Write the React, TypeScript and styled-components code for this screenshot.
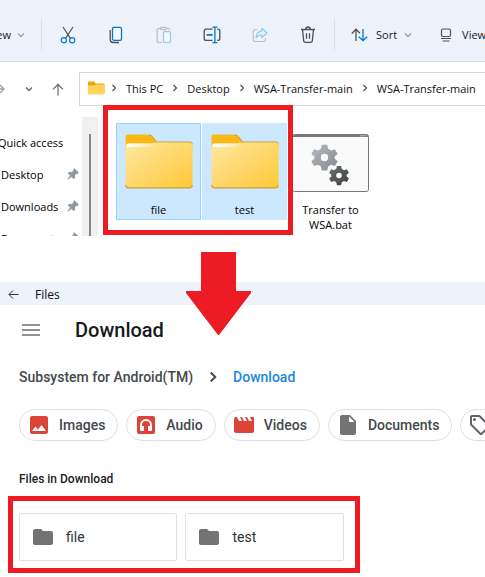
import React from "react";
import styled, { createGlobalStyle } from "styled-components";

const Global = createGlobalStyle`
  * { box-sizing: border-box; }
  body { margin: 0; background: #ffffff; overflow-x: hidden; }
  button { border: 0; padding: 0; margin: 0; background: none; font: inherit; color: inherit; white-space: nowrap; }
  a { color: inherit; text-decoration: none; white-space: nowrap; }
  svg { display: block; flex: none; }
`;

const RED = "#ed1c24";

const Page = styled.main`
  position: relative;
  overflow: hidden;
`;

/* ---------- Explorer window ---------- */

const Explorer = styled.section`
  font-family: "Open Sans", "Noto Sans", sans-serif;
  font-size: 11px;
  line-height: 15px;
  color: #1a1a1a;
  height: 236px;
  overflow: hidden;
`;

const Ribbon = styled.div`
  display: flex;
  align-items: center;
  height: 62px;
  padding-top: 8px;
  background: #eef2fa;
  border-bottom: 1px solid #d9dce2;
`;

const FirstGroup = styled.div`
  display: flex;
  flex: none;
  width: 41px;
`;

const RibbonMenu = styled.button<{ $gap: number; $indent: number }>`
  display: flex;
  flex: none;
  align-items: center;
  gap: ${(p) => p.$gap}px;
  margin-left: ${(p) => p.$indent}px;
`;

const Separator = styled.span`
  flex: none;
  width: 1px;
  height: 32px;
  background: #dcdfe5;
`;

const ToolGroup = styled.div`
  display: flex;
  flex: none;
  gap: 24px;
  padding: 0 14px;
`;

const ToolButton = styled.button`
  display: grid;
  place-items: center;
  width: 24px;
  height: 24px;
`;

const AddressRow = styled.div`
  display: flex;
  align-items: center;
  padding-top: 10px;
`;

const NavButtons = styled.div`
  display: flex;
  flex: none;
  align-items: center;
  width: 93px;
  height: 34px;
  margin-left: -14px;
`;

const NavButton = styled.button<{ $width: number }>`
  display: grid;
  place-items: center;
  width: ${(p) => p.$width}px;
  height: 24px;
`;

const AddressBar = styled.nav`
  display: flex;
  flex: 1;
  align-items: center;
  min-width: 0;
  height: 34px;
  padding: 0 0 2px 8px;
  overflow: hidden;
  border: 1px solid #d9d9d9;
  border-right: 0;
  color: #111111;
  > a { padding: 0 3px; }
`;

const CrumbGap = styled.span`
  display: grid;
  flex: none;
  place-items: center;
  width: 18px;
`;

const ExplorerBody = styled.div`
  display: flex;
  align-items: flex-start;
`;

const Sidebar = styled.ul`
  flex: none;
  width: 82px;
  margin: 0;
  padding: 20px 0 0;
  list-style: none;
`;

const SideItem = styled.li<{ $indent: number }>`
  display: flex;
  align-items: center;
  justify-content: space-between;
  height: 32px;
  padding-right: 3px;
  color: #000000;
  white-space: nowrap;
  > a { margin-left: ${(p) => p.$indent}px; }
`;

const ScrollTrack = styled.div`
  flex: none;
  width: 16px;
  height: 119px;
  margin-top: 11px;
  padding: 17px 7px 0;
  background: #f0f0f0;
`;

const ScrollThumb = styled.div`
  width: 2px;
  height: 102px;
  background: #858585;
`;

const PaneEdge = styled.div`
  flex: none;
  width: 1px;
  height: 119px;
  margin: 11px 15px 0 2px;
  background: #f5f5f5;
`;

const FileGrid = styled.div`
  display: flex;
  align-items: flex-start;
  gap: 1px;
  padding-top: 17px;
`;

const Selection = styled.div`
  position: relative;
  display: flex;
  flex: none;
  gap: 1px;
`;

const Highlight = styled.span<{ $inset: string }>`
  position: absolute;
  z-index: 2;
  inset: ${(p) => p.$inset};
  border: 5px solid ${RED};
  pointer-events: none;
`;

const FileTile = styled.button<{ $state: "focused" | "selected" | "plain" }>`
  display: flex;
  flex: none;
  flex-direction: column;
  align-items: center;
  gap: 10px;
  width: 85px;
  min-height: 97px;
  padding: 10px 8px 0;
  color: #000000;
  text-align: center;
  white-space: normal;
  border: 1px solid
    ${(p) => (p.$state === "focused" ? "#99d1ff" : p.$state === "selected" ? "#cce8ff" : "transparent")};
  background: ${(p) => (p.$state === "plain" ? "transparent" : "#cce8ff")};
`;

/* ---------- Android files window ---------- */

const AndroidWindow = styled.section`
  margin-top: 46px;
  font-family: Roboto, sans-serif;
  font-size: 14px;
  font-weight: 500;
  color: #43494d;
`;

const TitleBar = styled.div`
  display: flex;
  align-items: center;
  gap: 15px;
  height: 23px;
  padding: 2px 0 0 8px;
  background: #eef2fa;
  font: 12px/16px "Open Sans", "Noto Sans", sans-serif;
  color: #111111;
`;

const AppBar = styled.header`
  display: flex;
  align-items: center;
  gap: 35px;
  height: 48px;
  padding: 2px 0 0 22px;
`;

const AppTitle = styled.h1`
  margin: 0;
  font-size: 20px;
  line-height: 24px;
  font-weight: 500;
  color: #17191c;
`;

const PathRow = styled.nav`
  display: flex;
  align-items: center;
  gap: 14px;
  height: 48px;
  padding-left: 19px;
`;

const CurrentPath = styled.a`
  color: #2186e0;
`;

const Chips = styled.div`
  display: flex;
  gap: 8px;
  padding: 8px 0 0 19px;
`;

const Chip = styled.button`
  display: flex;
  flex: none;
  align-items: center;
  gap: 8px;
  height: 32px;
  padding: 0 12px 0 7px;
  border: 1px solid #dfe0e2;
  border-radius: 16px;
`;

const SectionTitle = styled.h2`
  margin: 30px 0 26px 19px;
  font-size: 12px;
  line-height: 16px;
  font-weight: 500;
  color: #202124;
`;

const Cards = styled.div`
  position: relative;
  display: grid;
  grid-template-columns: 1fr 1fr;
  gap: 8px;
  width: 67%;
  margin: 0 0 16px 19px;
`;

const Card = styled.button`
  display: flex;
  align-items: center;
  gap: 11px;
  height: 48px;
  padding-left: 11px;
  border: 1px solid #e0e0e0;
  border-radius: 2px;
  font-weight: 400;
  color: #303336;
`;

const Arrow = styled.svg`
  position: absolute;
  z-index: 3;
  top: 252px;
  left: 186px;
`;

/* ---------- Drawings ---------- */

const Chevron = ({ down = false, color = "#555", size = 8, stroke = 1.3 }: { down?: boolean; color?: string; size?: number; stroke?: number }) => (
  <svg width={size} height={size} viewBox="0 0 8 8" fill="none" stroke={color} strokeWidth={stroke}>
    <path d={down ? "M1 2.5 4 5.5 7 2.5" : "M2.5 1 5.5 4 2.5 7"} />
  </svg>
);

const ForwardArrow = () => (
  <svg width="10" height="10" viewBox="0 0 10 10" fill="none" stroke="#a0a0a0" strokeWidth="1.3">
    <path d="M0 5h9M5 1l4 4-4 4" />
  </svg>
);

const Scissors = () => (
  <svg width="16" height="18" viewBox="0 0 16 18" fill="none" strokeWidth="1.2">
    <path d="M3 1l7.6 11.6M13 1 5.4 12.6" stroke="#505050" />
    <circle cx="3.8" cy="14.2" r="2.6" stroke="#0078d4" />
    <circle cx="12.2" cy="14.2" r="2.6" stroke="#0078d4" />
  </svg>
);

const Copy = () => (
  <svg width="14" height="18" viewBox="0 0 14 18" fill="none" strokeWidth="1.3">
    <path d="M1.2 4v9.5a3 3 0 0 0 3 3H10" stroke="#505050" />
    <rect x="3.5" y="1.3" width="9" height="13" rx="1.6" stroke="#0078d4" fill="#f5f9fe" />
  </svg>
);

const Paste = () => (
  <svg width="16" height="18" viewBox="0 0 16 18" fill="none" strokeWidth="1.2">
    <path d="M5 2.5H2.6c-.9 0-1.5.6-1.5 1.5v11c0 .9.6 1.5 1.5 1.5H6M10 2.5h2.2c.8 0 1.4.5 1.4 1.3" stroke="#b9bcc1" />
    <rect x="4.5" y="1.4" width="6" height="2.2" rx="1.1" stroke="#b9bcc1" />
    <rect x="7.5" y="5.6" width="7" height="10.9" rx="1.2" stroke="#93c8f0" fill="#f2f8fe" />
  </svg>
);

const Rename = () => (
  <svg width="18" height="18" viewBox="0 0 18 18" fill="none" strokeWidth="1.3">
    <path d="M9.5 3.2H3.2a2 2 0 0 0-2 2v7.2a2 2 0 0 0 2 2h6.3M14.3 3.2h.5a2 2 0 0 1 2 2v7.2a2 2 0 0 1-2 2h-.5" stroke="#505050" />
    <path d="M9.4 1.2h5M9.4 16.6h5M11.9 1.2v15.4" stroke="#0078d4" />
    <path d="M3.6 8.9h6" stroke="#0078d4" strokeWidth="1.8" />
  </svg>
);

const Share = () => (
  <svg width="16" height="16" viewBox="0 0 16 16" fill="none" strokeWidth="1.1" strokeLinejoin="round">
    <path d="M5.5 2.8H3A1.8 1.8 0 0 0 1.2 4.6v8A1.8 1.8 0 0 0 3 14.5h8.6a1.8 1.8 0 0 0 1.8-1.9V11" stroke="#b9bcc1" />
    <path d="M9.8 1.3 15 6l-5.2 4.6V8C7 7.8 5.3 8.8 4 11c.1-4 2.3-6.6 5.8-7z" stroke="#8fc6f1" fill="#e5f2fd" />
  </svg>
);

const Trash = () => (
  <svg width="16" height="18" viewBox="0 0 16 18" fill="none" stroke="#505050" strokeWidth="1.3">
    <path d="M1 3.5h14M5.7 3.3a2.3 2.3 0 0 1 4.6 0M2.5 3.5l1.2 11.4c.1.9.7 1.5 1.6 1.5h5.4c.9 0 1.5-.6 1.6-1.5l1.2-11.4M6.5 7.2v5.6M9.5 7.2v5.6" />
  </svg>
);

const SortIcon = () => (
  <svg width="18" height="14" viewBox="0 0 18 14" fill="none" strokeWidth="1.3">
    <path d="M5 13V1.5M.8 5.5 5 1.2l4 4" stroke="#505050" />
    <path d="M12 1v11.5M7.8 8.7l4.2 4 4.2-4" stroke="#0078d4" />
  </svg>
);

const ViewIcon = () => (
  <svg width="12" height="14" viewBox="0 0 12 14" fill="none" stroke="#505050" strokeWidth="1.2">
    <rect x="1.5" y="1" width="9" height="7.5" rx="1.5" />
    <path d="M1 10.5h10M2.5 13h7" />
  </svg>
);

const UpArrow = () => (
  <svg width="12" height="13" viewBox="0 0 12 13" fill="none" stroke="#666" strokeWidth="1.2">
    <path d="M6 12.5V1.5M1 6.3l5-5 5 5" />
  </svg>
);

const BackArrow = () => (
  <svg width="12" height="10" viewBox="0 0 12 10" fill="none" stroke="#333" strokeWidth="1">
    <path d="M10.5 4.5H1M5 .5l-4 4 4 4" />
  </svg>
);

const SmallFolder = () => (
  <svg width="17" height="14" viewBox="0 0 17 14">
    <path d="M0 12V1.5Q0 .5 1 .5h5l2 2h7.5q1 0 1 1V12z" fill="#eda50e" />
    <path d="M0 4.5h5.5l2-1H16q.5 0 .5.5v8.5q0 1-1 1H1q-1 0-1-1z" fill="#ffd45a" />
  </svg>
);

const BigFolder = ({ id }: { id: string }) => (
  <svg width="68" height="58" viewBox="0 3 68 58">
    <defs>
      <linearGradient id={id} x1="0" y1="0" x2="1" y2="1">
        <stop offset="0" stopColor="#ffe8a4" />
        <stop offset="1" stopColor="#ffc735" />
      </linearGradient>
      <linearGradient id={id + "s"} x1="0" y1="0" x2="1" y2="0">
        <stop offset="0" stopColor="#ffffff" />
        <stop offset="1" stopColor="#ffe7a0" />
      </linearGradient>
    </defs>
    <path d="M.5 50V5.5q0-2 2-2h21q3 0 4.5 2l4 5.5H65q2.5 0 2.5 2.5v6H.5z" fill="#fbb917" />
    <path d="M24 4q2 0 3.5 2l4 5H65q2.2 0 2.2 2" fill="none" stroke="#c99c3b" strokeWidth="1" />
    <path d="M.5 15q0-2.5 2.5-2.5h21q3 0 5-1h35.5q3 0 3 3V54q0 3-3 3H3.5q-3 0-3-3z" fill={`url(#${id})`} />
    <path d="M2 14.5q0-2 2-2h25.5l-2.5 2.5q-1 1-3 1H3q-1 0-1 1z" fill={`url(#${id}s)`} />
    <path d="M.8 54q0 2.8 2.7 2.8h61q2.7 0 2.7-2.8" fill="none" stroke="#ce9f36" strokeWidth="1.2" />
  </svg>
);

const GEAR = "M-2.6-12h5.2l.8 3.7 2.8 1.6 3.6-1.2 2.6 4.5-2.8 2.5v2l2.8 2.5-2.6 4.5-3.6-1.2-2.8 1.6-.8 3.7h-5.2l-.8-3.7-2.8-1.6-3.6 1.2-2.6-4.5 2.8-2.5v-2l-2.8-2.5 2.6-4.5 3.6 1.2 2.8-1.6zM0-3.5a3.5 3.5 0 1 0 0 7 3.5 3.5 0 1 0 0-7z";

const BatIcon = () => (
  <svg width="78" height="58" viewBox="0 0 78 58">
    <defs>
      <linearGradient id="gearLight" x1="0" y1="0" x2="1" y2="1">
        <stop offset="0" stopColor="#b4b9be" />
        <stop offset="1" stopColor="#858b91" />
      </linearGradient>
      <linearGradient id="gearDark" x1="0" y1="0" x2="1" y2="1">
        <stop offset="0" stopColor="#6b7074" />
        <stop offset="1" stopColor="#3c4043" />
      </linearGradient>
    </defs>
    <rect x=".5" y=".5" width="76" height="57" rx="2" fill="#fafafa" stroke="#777" />
    <path d="M1 3V2q0-1 1-1h73q1 0 1 1v1z" fill="#777" />
    <path d="M68 1.8h6" stroke="#ddd" strokeDasharray="1.5 .8" />
    <g fillRule="evenodd">
      <path transform="translate(32.5 23.5) scale(1.06)" d={GEAR} fill="url(#gearLight)" />
      <path transform="translate(47 41.5) scale(.8)" d={GEAR} fill="url(#gearDark)" />
    </g>
  </svg>
);

const Pin = () => (
  <svg width="12" height="12" viewBox="0 0 12 12">
    <path d="M7.2.3 11.7 4.3 10.6 5.9 9.4 5.8 7.9 7.4 8.1 9.8 6.8 10.9 4.4 8.9 1 11.8.4 11.2l2.7-3.7L.9 5.5l1.1-1.5 2.7-.1L6.5 2.5 6.2 1.3z" fill="#8f99a3" />
  </svg>
);

const ChipIcon = ({ d, color }: { d: string; color: string }) => (
  <svg width="24" height="24" viewBox="0 0 24 24" fill={color} fillRule="evenodd">
    <path d={d} />
  </svg>
);

const IMAGE = "M21 19V5c0-1.1-.9-2-2-2H5c-1.1 0-2 .9-2 2v14c0 1.1.9 2 2 2h14c1.1 0 2-.9 2-2zM8.5 13.5l2.5 3.01L14.5 12l4.5 6H5l3.5-4.5z";
const AUDIO = "M5 3h14a2 2 0 0 1 2 2v14a2 2 0 0 1-2 2H5a2 2 0 0 1-2-2V5c0-1.1.9-2 2-2zM12 6a6 6 0 0 0-6 6v4.5A1.5 1.5 0 0 0 7.5 18H10v-5H8v-1a4 4 0 0 1 8 0v1h-2v5h2.5a1.5 1.5 0 0 0 1.5-1.5V12a6 6 0 0 0-6-6z";
const VIDEO = "M18 4l2 4h-3l-2-4h-2l2 4h-3l-2-4H8l2 4H7L5 4H4c-1.1 0-1.99.9-1.99 2L2 18c0 1.1.9 2 2 2h16c1.1 0 2-.9 2-2V4h-4z";
const DOCUMENT = "M6 2c-1.1 0-1.99.9-1.99 2L4 20c0 1.1.89 2 1.99 2H18c1.1 0 2-.9 2-2V8l-6-6H6zm7 7V3.5L18.5 9H13z";
const TAG = "M21.41 11.58l-9-9C12.05 2.22 11.55 2 11 2H4c-1.1 0-2 .9-2 2v7c0 .55.22 1.05.59 1.42l9 9c.36.36.86.58 1.41.58s1.05-.22 1.41-.59l7-7c.37-.36.59-.86.59-1.41s-.23-1.06-.59-1.42zM13 20.01L4 11V4h7v-.01l9 9-7 7.02zM6.5 5a1.5 1.5 0 1 0 0 3 1.5 1.5 0 1 0 0-3z";
const FOLDER = "M10 4H4c-1.1 0-1.99.9-1.99 2L2 18c0 1.1.9 2 2 2h16c1.1 0 2-.9 2-2V8c0-1.1-.9-2-2-2h-8l-2-2z";

/* ---------- Data ---------- */

const tools = [
  { name: "Cut", icon: <Scissors /> },
  { name: "Copy", icon: <Copy /> },
  { name: "Paste", icon: <Paste /> },
  { name: "Rename", icon: <Rename /> },
  { name: "Share", icon: <Share /> },
  { name: "Delete", icon: <Trash /> },
];

const crumbs = ["This PC", "Desktop", "WSA-Transfer-main", "WSA-Transfer-main"];

const places = [
  { name: "Quick access", indent: -2, pinned: false },
  { name: "Desktop", indent: 1, pinned: true },
  { name: "Downloads", indent: 1, pinned: true },
  { name: "Documents", indent: 1, pinned: true },
];

const chips = [
  { name: "Images", d: IMAGE, color: "#db4437" },
  { name: "Audio", d: AUDIO, color: "#db4437" },
  { name: "Videos", d: VIDEO, color: "#db4437" },
  { name: "Documents", d: DOCUMENT, color: "#737373" },
  { name: "Large files", d: TAG, color: "#5f6368" },
];

export default function App() {
  return (
    <Page>
      <Global />
      <Explorer>
        <Ribbon>
          <FirstGroup>
            <RibbonMenu $gap={6} $indent={-12}>
              New
              <Chevron down color="#9a9da2" />
            </RibbonMenu>
          </FirstGroup>
          <Separator />
          <ToolGroup>
            {tools.map((t) => (
              <ToolButton key={t.name} aria-label={t.name}>{t.icon}</ToolButton>
            ))}
          </ToolGroup>
          <Separator />
          <RibbonMenu $gap={7} $indent={16}>
            <SortIcon />
            Sort
            <Chevron down color="#9a9da2" />
          </RibbonMenu>
          <RibbonMenu $gap={10} $indent={28}>
            <ViewIcon />
            View
          </RibbonMenu>
        </Ribbon>

        <AddressRow>
          <NavButtons>
            <NavButton $width={28} aria-label="Forward"><ForwardArrow /></NavButton>
            <NavButton $width={29} aria-label="Recent locations"><Chevron down color="#666" /></NavButton>
            <NavButton $width={29} aria-label="Up"><UpArrow /></NavButton>
          </NavButtons>
          <AddressBar aria-label="Address">
            <SmallFolder />
            {crumbs.map((c, i) => (
              <React.Fragment key={i}>
                <CrumbGap><Chevron /></CrumbGap>
                <a href="#">{c}</a>
              </React.Fragment>
            ))}
          </AddressBar>
        </AddressRow>

        <ExplorerBody>
          <Sidebar>
            {places.map((p) => (
              <SideItem key={p.name} $indent={p.indent}>
                <a href="#">{p.name}</a>
                {p.pinned && <Pin />}
              </SideItem>
            ))}
          </Sidebar>
          <ScrollTrack><ScrollThumb /></ScrollTrack>
          <PaneEdge />
          <FileGrid>
            <Selection>
              <FileTile $state="focused"><BigFolder id="folderA" />file</FileTile>
              <FileTile $state="selected"><BigFolder id="folderB" />test</FileTile>
              <Highlight $inset="-18px -6px -15px -13px" />
            </Selection>
            <FileTile $state="plain"><BatIcon />Transfer to WSA.bat</FileTile>
          </FileGrid>
        </ExplorerBody>
      </Explorer>

      <Arrow width="66" height="84" viewBox="0 0 66 84">
        <path d="M15 0h35v39h15v2L33 83h-1L0 41v-2h15z" fill={RED} />
      </Arrow>

      <AndroidWindow>
        <TitleBar>
          <button aria-label="Back"><BackArrow /></button>
          Files
        </TitleBar>
        <AppBar>
          <button aria-label="Menu">
            <svg width="18" height="12" viewBox="0 0 18 12" fill="#8f9195">
              <path d="M0 0h18v2H0zM0 5h18v2H0zM0 10h18v2H0z" />
            </svg>
          </button>
          <AppTitle>Download</AppTitle>
        </AppBar>
        <PathRow aria-label="Folder path">
          <a href="#">Subsystem for Android(TM)</a>
          <Chevron color="#43494d" size={12} />
          <CurrentPath href="#">Download</CurrentPath>
        </PathRow>
        <Chips>
          {chips.map((c) => (
            <Chip key={c.name}>
              <ChipIcon d={c.d} color={c.color} />
              {c.name}
            </Chip>
          ))}
        </Chips>
        <SectionTitle>Files in Download</SectionTitle>
        <Cards>
          <Card><ChipIcon d={FOLDER} color="#737373" />file</Card>
          <Card><ChipIcon d={FOLDER} color="#737373" />test</Card>
          <Highlight $inset="-17px -16px -12px -11px" />
        </Cards>
      </AndroidWindow>
    </Page>
  );
}
